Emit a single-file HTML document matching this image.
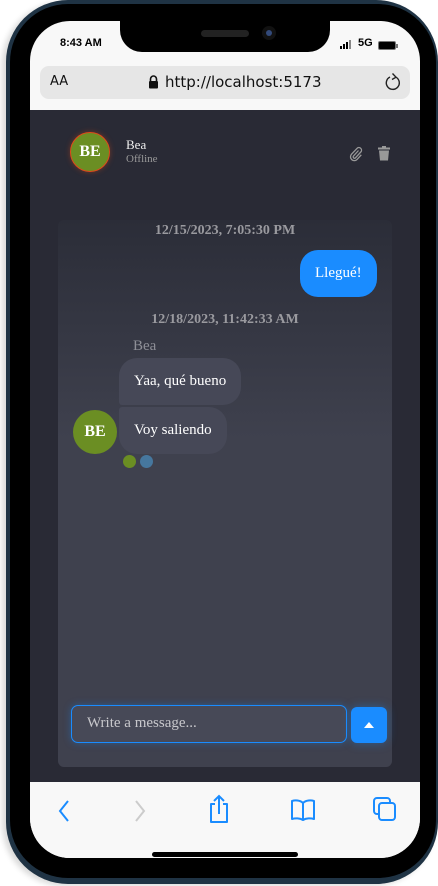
<!DOCTYPE html>
<html><head><meta charset="utf-8"><style>
*{box-sizing:border-box;margin:0;padding:0}
body{width:438px;height:886px;background:#fff;position:relative;overflow:hidden;font-family:"Liberation Serif",serif}
.frame{position:absolute;left:6px;top:0;width:432px;height:884px;border-radius:62px;background:#1f3344;box-shadow:-4px 2px 6px rgba(0,0,0,.15)}
.bezel{position:absolute;left:10px;top:4px;width:426px;height:874px;border-radius:58px;background:#000}
.clip{position:absolute;left:0;top:0;width:438px;height:886px;clip-path:inset(21px 18px 28px 30px round 40px);background:#f8f8f8}
.notch{position:absolute;left:120px;top:0;width:210px;height:52px;background:#000;border-radius:0 0 22px 22px}
.spk{position:absolute;left:201px;top:30px;width:48px;height:7px;border-radius:4px;background:#222}
.cam{position:absolute;left:262px;top:26px;width:14px;height:14px;border-radius:50%;background:#111}
.cam:after{content:"";position:absolute;left:4px;top:4px;width:6px;height:6px;border-radius:50%;background:#334a7a}
.sb{position:absolute;top:37px;font:bold 11px "Liberation Sans",sans-serif;color:#000;white-space:nowrap}
.url{position:absolute;left:40px;top:66px;width:370px;height:33px;border-radius:9px;background:#e6e6e6;font:15px "DejaVu Sans",sans-serif;color:#111;white-space:nowrap}
.dark{position:absolute;left:30px;top:110px;width:390px;height:672px;background:#292a35}
.panel{position:absolute;left:58px;top:220px;width:334px;height:547px;border-radius:6px;background:linear-gradient(#2b2d38,#3f414e 40%,#3f414e)}
.av{position:absolute;border-radius:50%;background:#6b8e23;color:#fff;font-weight:bold;display:flex;align-items:center;justify-content:center}
.ts{position:absolute;text-align:center;color:#9a9a9f;font-weight:bold;font-size:14px;white-space:nowrap}
.bub{position:absolute;color:#fff;font-size:15px;padding:0 15px;display:flex;align-items:center;white-space:nowrap}
.bottom{position:absolute;left:30px;top:782px;width:390px;height:80px;background:#f8f8f8}
</style></head><body>
<div class="frame"></div>
<div class="bezel"></div>
<div class="clip">
<div class="sb" style="left:60px">8:43 AM</div>
<svg style="position:absolute;left:340px;top:40px" width="14" height="9"><rect x="0" y="6" width="2" height="3" fill="#000"/><rect x="3" y="4" width="2" height="5" fill="#000"/><rect x="6" y="2" width="2" height="7" fill="#000"/><rect x="9" y="0" width="2" height="9" fill="#888"/></svg>
<div class="sb" style="left:358px">5G</div>
<div style="position:absolute;left:378px;top:41px;width:18px;height:9px;border:1px solid #777;border-radius:2px;background:#000"></div>
<div style="position:absolute;left:396px;top:44px;width:2px;height:4px;background:#777"></div>
<div class="url">
  <span style="position:absolute;left:10px;top:8px;font-size:13px">AA</span>
  <svg style="position:absolute;left:108px;top:9px" width="11" height="14" viewBox="0 0 11 14"><path d="M2.5 6V4a3 3 0 0 1 6 0v2" stroke="#111" stroke-width="1.6" fill="none"/><rect x="1" y="6" width="9" height="7.5" rx="1" fill="#111"/></svg>
  <span style="position:absolute;left:125px;top:7px">http://localhost:5173</span>
  <svg style="position:absolute;left:344px;top:6px" width="18" height="20" viewBox="0 0 18 20"><path d="M12 5.2A6.5 6.5 0 1 1 6 5" stroke="#222" stroke-width="1.4" fill="none"/><path d="M8.5 1.5l3.5 3.7-4 2.3" stroke="#222" stroke-width="1.4" fill="none"/></svg>
</div>
<div class="dark"></div>
<div class="av" style="left:70px;top:132px;width:40px;height:40px;border:1.5px solid #e04a1a;font-size:16px;box-shadow:0 0 6px rgba(224,74,26,.4)">BE</div>
<div style="position:absolute;left:126px;top:137px;color:#eee;font-size:13px">Bea</div>
<div style="position:absolute;left:126px;top:153px;color:#999;font-size:11px">Offline</div>
<svg style="position:absolute;left:348px;top:146px" width="16" height="16" viewBox="0 0 16 16"><path d="M10.5 4.5l-5 5.5a1.3 1.3 0 0 0 2 1.8l5.3-5.8a2.6 2.6 0 0 0-3.8-3.6L3.5 8.2a3.8 3.8 0 0 0 5.6 5.2l4.2-4.6" stroke="#999" stroke-width="1.3" fill="none"/></svg>
<svg style="position:absolute;left:377px;top:146px" width="14" height="15" viewBox="0 0 14 15"><rect x="1" y="1.5" width="12" height="2" fill="#999"/><rect x="5" y="0" width="4" height="2" fill="#999"/><path d="M2 4.5h10l-1 10H3z" fill="#999"/></svg>
<div class="panel"></div>
<div class="ts" style="left:0;top:223px;width:450px">12/15/2023, 7:05:30 PM</div>
<div class="bub" style="left:300px;top:250px;height:47px;border-radius:18px;background:#1a8cff">Llegué!</div>
<div class="ts" style="left:0;top:312px;width:450px">12/18/2023, 11:42:33 AM</div>
<div style="position:absolute;left:133px;top:338px;color:#8e8f97;font-size:15px">Bea</div>
<div class="bub" style="left:119px;top:358px;width:122px;height:47px;border-radius:18px 18px 18px 3px;background:#464857">Yaa, qué bueno</div>
<div class="bub" style="left:119px;top:407px;width:108px;height:47px;border-radius:3px 18px 18px 18px;background:#464857">Voy saliendo</div>
<div class="av" style="left:73px;top:410px;width:44px;height:44px;font-size:16px">BE</div>
<div style="position:absolute;left:123px;top:455px;width:13px;height:13px;border-radius:50%;background:#6b8e23"></div>
<div style="position:absolute;left:140px;top:455px;width:13px;height:13px;border-radius:50%;background:#46779e"></div>
<div style="position:absolute;left:71px;top:705px;width:276px;height:38px;border:1.5px solid #1a8cff;border-radius:7px;background:#474957;box-shadow:0 0 8px rgba(26,140,255,.35);color:#c8c8cc;font-size:15px;padding:9px 0 0 15px;white-space:nowrap">Write a message...</div>
<div style="position:absolute;left:351px;top:707px;width:36px;height:36px;border-radius:6px;background:#1a8cff;box-shadow:0 0 10px rgba(26,140,255,.4)"><div style="position:absolute;left:13px;top:15px;width:0;height:0;border-left:5px solid transparent;border-right:5px solid transparent;border-bottom:6px solid #fff"></div></div>
<div class="bottom"></div>
<svg style="position:absolute;left:56px;top:798px" width="16" height="26" viewBox="0 0 16 26"><path d="M12 3L4 13l8 10" stroke="#1a8cff" stroke-width="2" fill="none"/></svg>
<svg style="position:absolute;left:132px;top:798px" width="16" height="26" viewBox="0 0 16 26"><path d="M4 3l8 10-8 10" stroke="#ccc" stroke-width="2" fill="none"/></svg>
<svg style="position:absolute;left:207px;top:794px" width="24" height="30" viewBox="0 0 24 30"><path d="M8 10H4v18h16V10h-4" stroke="#1a8cff" stroke-width="2" fill="none" stroke-linejoin="round"/><path d="M12 20V2M7 7l5-5 5 5" stroke="#1a8cff" stroke-width="2" fill="none"/></svg>
<svg style="position:absolute;left:290px;top:799px" width="26" height="22" viewBox="0 0 26 22"><path d="M13 4C10 1 5 1 2 2v18c3-1 8-1 11 1 3-2 8-2 11-1V2c-3-1-8-1-11 2zM13 4v17" stroke="#1a8cff" stroke-width="2" fill="none" stroke-linejoin="round"/></svg>
<svg style="position:absolute;left:373px;top:797px" width="24" height="26" viewBox="0 0 24 26"><rect x="1" y="1" width="16" height="16" rx="3" stroke="#1a8cff" stroke-width="2" fill="none"/><rect x="6" y="6" width="16" height="17" rx="3" stroke="#1a8cff" stroke-width="2" fill="#f8f8f8"/></svg>
<div style="position:absolute;left:152px;top:852px;width:146px;height:5px;border-radius:3px;background:#000"></div>
<div class="notch"></div>
<div class="spk"></div><div class="cam"></div>
</div>
</body></html>
